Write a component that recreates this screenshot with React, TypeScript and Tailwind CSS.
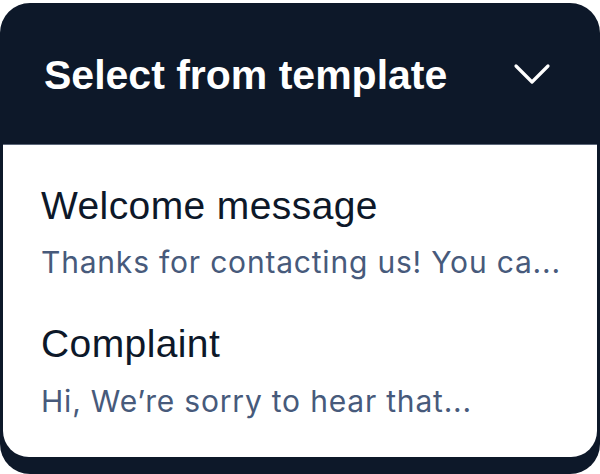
import React from "react";

export default function App() {
  return (
    <div className="w-[600px] h-[474px] bg-white pt-[3px]">
      <div className="h-[471px] rounded-[30px] bg-[#0d1829] flex flex-col px-[3px] pb-[17px]">
        <div className="h-[141px] flex items-center justify-between pl-[41px] pr-[46px] pt-[4px] shrink-0">
          <span
            className="text-white font-bold text-[41px] leading-none"
            style={{ fontFamily: "'Liberation Sans', Arial, sans-serif" }}
          >
            Select from template
          </span>
          <svg width="38" height="22" viewBox="0 0 38 22" fill="none" className="-mt-[4px]">
            <path d="M3 3 L19 19 L35 3" stroke="white" strokeWidth="3.2" strokeLinecap="round" strokeLinejoin="round" />
          </svg>
        </div>
        <div className="flex-1 bg-white rounded-b-[26px] border-t border-[#5b6678] px-[38px] pt-[39px] flex flex-col">
          <div
            className="text-[#0d1829] text-[39px] leading-[44px] tracking-[0.4px] whitespace-nowrap"
            style={{ fontFamily: "'Liberation Sans', Arial, sans-serif" }}
          >
            Welcome message
          </div>
          <div
            className="text-[#475a7b] text-[30px] leading-[40px] tracking-[0.8px] mt-[14px] whitespace-nowrap"
            style={{ fontFamily: "Inter, 'Noto Sans', sans-serif" }}
          >
            Thanks for contacting us! You ca...
          </div>
          <div
            className="text-[#0d1829] text-[39px] leading-[44px] tracking-[0.4px] mt-[40px] whitespace-nowrap"
            style={{ fontFamily: "'Liberation Sans', Arial, sans-serif" }}
          >
            Complaint
          </div>
          <div
            className="text-[#475a7b] text-[30px] leading-[40px] tracking-[0.8px] mt-[15px] whitespace-nowrap"
            style={{ fontFamily: "Inter, 'Noto Sans', sans-serif" }}
          >
            Hi, We’re sorry to hear that...
          </div>
        </div>
      </div>
    </div>
  );
}
